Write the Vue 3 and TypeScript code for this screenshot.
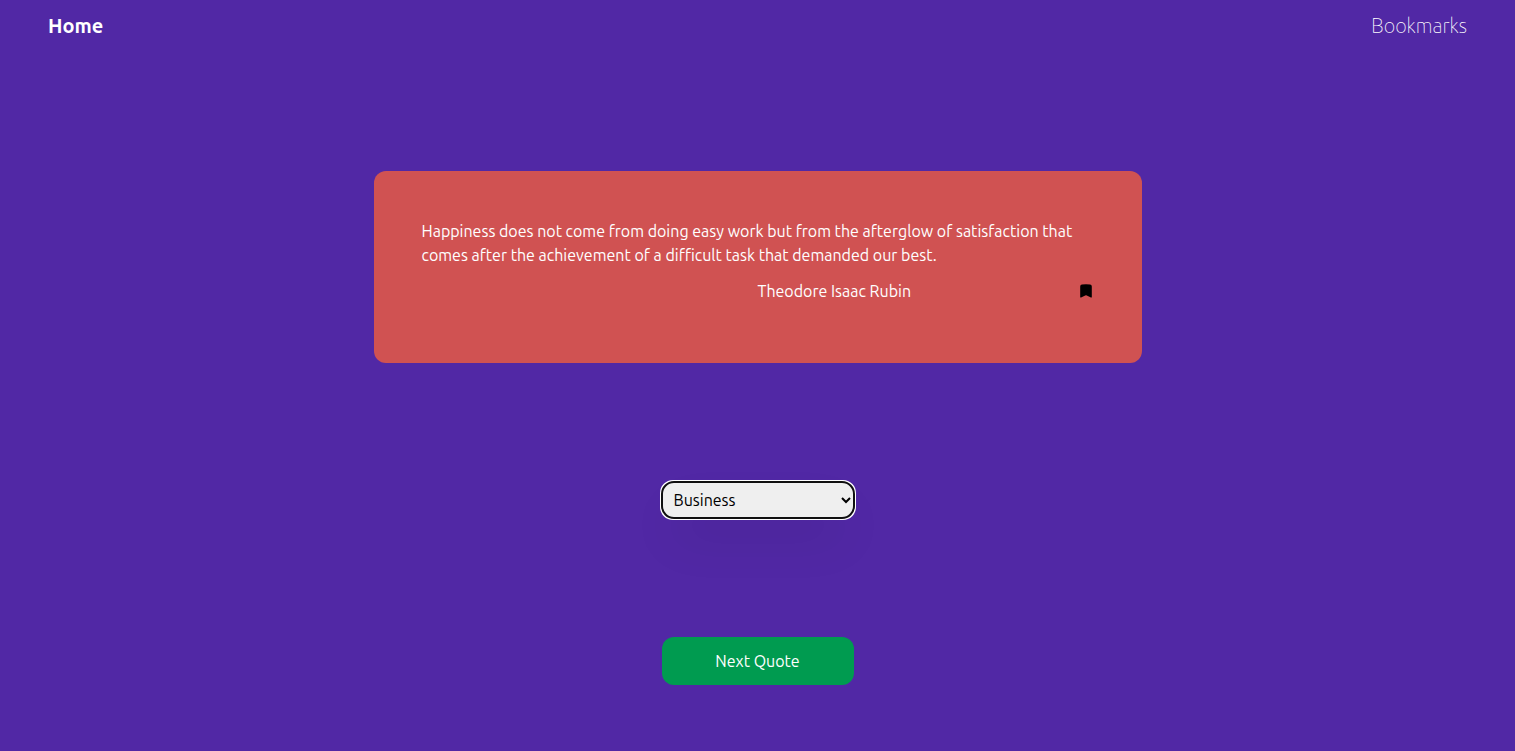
<script setup lang="ts">
import { onMounted, ref } from 'vue'

interface Quote {
  text: string
  author: string
}

const quote = ref<Quote>({
  text: 'Happiness does not come from doing easy work but from the afterglow of satisfaction that comes after the achievement of a difficult task that demanded our best.',
  author: 'Theodore Isaac Rubin',
})
const categories: string[] = ['Business']
const category = ref('Business')
const picker = ref<HTMLSelectElement | null>(null)

onMounted(() => picker.value?.focus())
</script>

<template>
  <div class="page">
    <nav class="nav">
      <a class="link active" href="#home">Home</a>
      <a class="link" href="#bookmarks">Bookmarks</a>
    </nav>
    <main class="content">
      <article class="card">
        <p class="text">{{ quote.text }}</p>
        <div class="meta">
          <span class="author">{{ quote.author }}</span>
          <button class="bookmark" type="button" aria-label="Bookmark this quote">
            <svg viewBox="0 0 16 16" width="16" height="16" aria-hidden="true">
              <path d="M4 1.5Q8 1.1 12 1.5Q13.8 1.7 13.8 3.4V14Q13.8 14.9 12.9 14.5L8.8 12.4Q8 12 7.2 12.4L3.1 14.5Q2.2 14.9 2.2 14V3.4Q2.2 1.7 4 1.5z" />
            </svg>
          </button>
        </div>
      </article>
      <select ref="picker" v-model="category" class="picker" aria-label="Category">
        <option v-for="name in categories" :key="name" :value="name">{{ name }}</option>
      </select>
      <button class="next" type="button">Next Quote</button>
    </main>
  </div>
</template>

<style>
body {
  margin: 0;
  background: #5128a5;
}
</style>

<style scoped>
.page {
  min-height: 100vh;
  box-sizing: border-box;
  background: #5128a5;
  color: #fff;
  font-family: Ubuntu, "Noto Sans", sans-serif;
  font-size: 16px;
  line-height: 24px;
}
.nav {
  display: flex;
  justify-content: space-between;
  padding: 12px 48px;
}
.link {
  color: #fff;
  font-size: 20px;
  font-weight: 100;
  line-height: 28px;
  text-decoration: none;
}
.link.active {
  font-weight: 700;
}
.content {
  display: flex;
  flex-direction: column;
  align-items: center;
  padding: 119px 24px 66px;
}
.card {
  box-sizing: border-box;
  width: 100%;
  max-width: 768px;
  padding: 48px;
  border-radius: 12px;
  background: #d05252;
}
.text {
  margin: 0;
}
.meta {
  display: flex;
  align-items: center;
  justify-content: space-between;
  margin: 12px 0;
}
.author {
  margin-left: 50%;
}
.bookmark {
  display: flex;
  padding: 0;
  border: 0;
  background: none;
  color: #000;
  cursor: pointer;
}
.bookmark svg {
  fill: currentColor;
}
.picker {
  box-sizing: border-box;
  width: 192px;
  height: 36px;
  margin-top: 119px;
  padding: 0 0 0 8px;
  border: 0;
  border-radius: 12px;
  background-color: #efefef;
  color: #000;
  font: inherit;
  box-shadow: 0 25px 50px -12px rgba(0, 0, 0, 0.18);
}
.next {
  width: 192px;
  margin-top: 119px;
  padding: 12px;
  border: 0;
  border-radius: 12px;
  background: #009b50;
  color: #fff;
  font: inherit;
  cursor: pointer;
}
</style>
